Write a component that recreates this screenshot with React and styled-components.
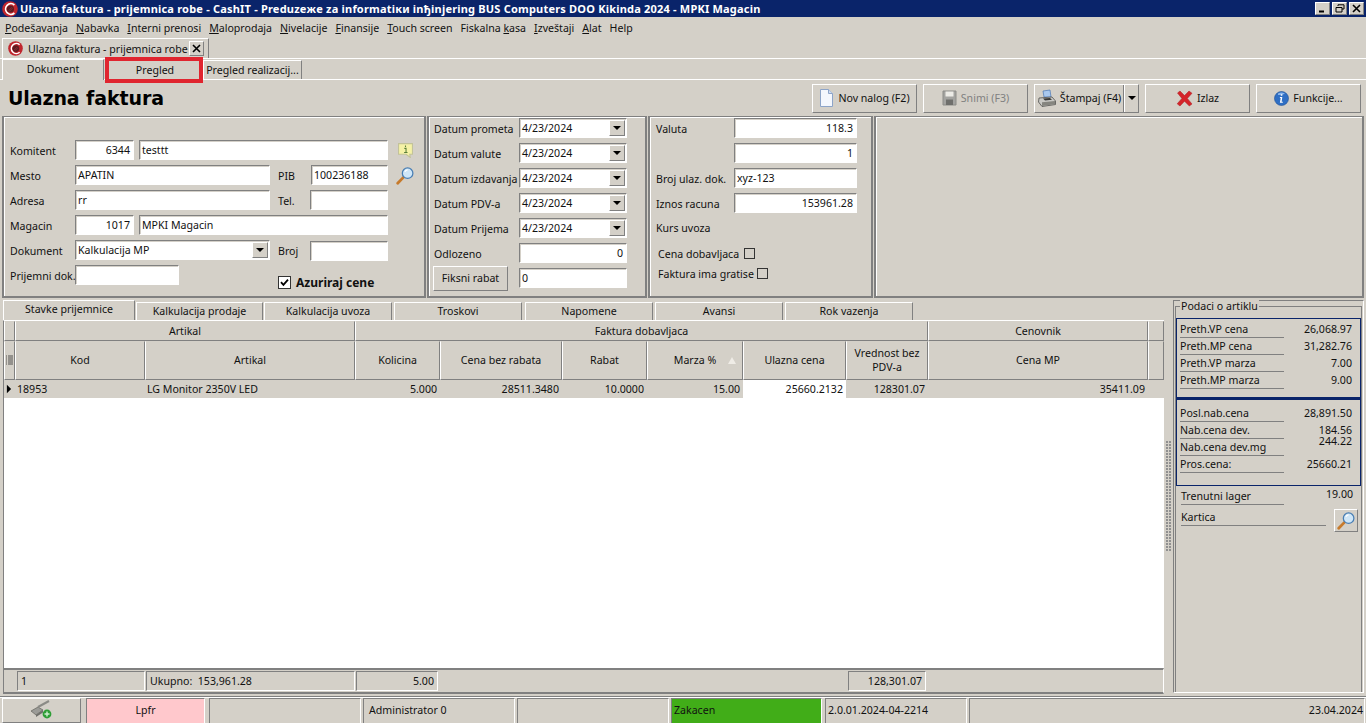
import React from 'react';
import styled, { createGlobalStyle, css } from 'styled-components';

const Global = createGlobalStyle`
  html, body { margin: 0; padding: 0; overflow: hidden; background: #d4d0c8; }
  * { box-sizing: border-box; }
`;

const FONT = `"Noto Sans", "DejaVu Sans", sans-serif`;
const BG = '#d4d0c8';

const sunken = css`
  border-style: solid;
  border-width: 1px;
  border-color: #808080 #fff #fff #808080;
`;
const raised = css`
  border-style: solid;
  border-width: 1px;
  border-color: #fff #808080 #808080 #fff;
`;

const Page = styled.div`
  width: 1366px; height: 723px; overflow: hidden; background: ${BG};
  display: flex; flex-direction: column;
  font: 10.6px/14px ${FONT}; color: #111;
`;
const TitleBar = styled.div`
  height: 17px; background: #0a246a; color: #fff; font-weight: 700;
  display: flex; align-items: center; padding: 0 2px 0 2px; flex: none;
  font-size: 11px; letter-spacing: 0.2px; white-space: nowrap;
`;
const TitleText = styled.span` margin-left: 2px; flex: 1; `;
const WinBtn = styled.button`
  width: 15px; height: 13px; padding: 0; margin-left: 2px; background: ${BG};
  ${raised}; display: flex; align-items: center; justify-content: center;
`;
const MenuBar = styled.div`
  height: 21px; flex: none; display: flex; align-items: center; padding-left: 5px; gap: 8px;
  white-space: nowrap;
`;
const MenuItem = styled.span` display: inline-block; `;
const MenuKey = styled.span` text-decoration: underline; `;
const DocStrip = styled.div`
  height: 21px; flex: none; padding-left: 2px; border-bottom: 1px solid #fff;
  display: flex; align-items: flex-end;
`;
const DocTab = styled.div`
  width: 207px; height: 20px; display: flex; align-items: center; padding-left: 5px;
  border-top: 1px solid #fff; border-left: 1px solid #fff; border-right: 1px solid #808080;
`;
const DocTitle = styled.span` margin-left: 5px; width: 161px; white-space: nowrap; `;
const CloseBox = styled.button`
  width: 15px; height: 15px; padding: 0; background: ${BG}; ${raised};
  display: flex; align-items: center; justify-content: center;
`;
const TabStrip = styled.div`
  height: 21px; flex: none; display: flex; align-items: flex-end; padding-left: 2px;
  border-bottom: 1px solid #fff;
`;
const PageTab = styled.div`
  position: relative; height: ${p => (p.$active ? 21 : 19)}px; width: ${p => p.$w}px;
  margin-left: ${p => p.$ml || 0}px; margin-bottom: ${p => (p.$active ? -1 : 0)}px;
  background: ${BG}; display: flex; align-items: center; justify-content: center;
  border-top: 1px solid #fff; border-left: 1px solid #fff; border-right: 1px solid #808080;
  white-space: nowrap; padding-bottom: ${p => (p.$active ? 3 : 0)}px;
  ${p => p.$marked && css`
    &::after {
      content: ''; position: absolute; left: -3px; right: -1px; top: -4px; bottom: -4px;
      border: 4px solid #e0252f;
    }
  `}
`;
const Head = styled.div`
  height: 36px; flex: none; display: flex; align-items: center; padding: 0 5px 0 8px;
`;
const H1 = styled.h1`
  margin: 0; flex: 1; font: 700 19px/26px "DejaVu Sans", sans-serif; color: #000; letter-spacing: -0.1px;
`;
const ToolBtn = styled.button`
  width: 105px; height: 29px; margin-left: ${p => p.$ml}px; padding: 0; background: ${BG};
  ${raised}; display: flex; align-items: center; justify-content: center; gap: 4px;
  font: 10.6px/14px ${FONT}; color: ${p => (p.disabled ? '#808080' : '#111')};
`;
const SplitBtn = styled.div`
  width: 105px; height: 29px; margin-left: 6px; background: ${BG}; ${raised};
  display: flex; align-items: stretch;
`;
const SplitMain = styled.div`
  flex: 1; display: flex; align-items: center; justify-content: center; gap: 3px;
  border-right: 1px solid #808080;
`;
const SplitArrow = styled.div`
  width: 14px; display: flex; align-items: center; justify-content: center;
  border-left: 1px solid #fff;
`;
const Arrow = styled.i`
  width: 0; height: 0; border-left: 4px solid transparent; border-right: 4px solid transparent;
  border-top: 4px solid #000; display: block;
`;
const FormRow = styled.div`
  height: 182px; flex: none; display: flex; padding-left: 2px; padding-right: 2px; gap: 1px;
`;
const Panel = styled.section`
  width: ${p => p.$w}px; flex: ${p => (p.$w ? 'none' : 1)};
  padding: ${p => p.$pt}px 0 0 ${p => p.$pl}px;
  border: 2px solid #808080;
  border-width: 1px 2px 2px 2px;
  box-shadow: inset 1px 1px 0 #fff;
`;
const Row = styled.div`
  height: 20px; margin-bottom: 5px; margin-top: ${p => p.$mt || 0}px;
  padding-left: ${p => p.$pl || 0}px;
  display: flex; align-items: center; white-space: nowrap;
`;
const Label = styled.label`
  width: ${p => p.$w}px; flex: none; padding-top: 1px; margin-left: ${p => p.$ml || 0}px;
`;
const Field = styled.div`
  width: ${p => p.$w}px; height: 20px; flex: none; background: #fff; ${sunken};
  box-shadow: inset 1px 1px 0 ${BG};
  margin-left: ${p => p.$ml || 0}px; margin-top: ${p => p.$mt || 0}px;
  text-align: ${p => (p.$right ? 'right' : 'left')};
  padding: 2px ${p => (p.$right ? 3 : 2)}px 0 2px; line-height: 14px;
`;
const Combo = styled(Field)`
  position: relative; padding-right: 18px;
`;
const ComboBtn = styled.span`
  position: absolute; right: 1px; top: 1px; bottom: 1px; width: 16px; background: ${BG}; ${raised};
  display: flex; align-items: center; justify-content: center;
`;
const Check = styled.span`
  width: ${p => p.$s || 11}px; height: ${p => p.$s || 11}px; flex: none; background: ${p => p.$bg || BG};
  border: 1px solid #333; display: flex; align-items: center; justify-content: center;
`;
const Azuriraj = styled.div`
  display: flex; align-items: center; margin: 15px 0 0 99px; font-weight: 700; font-size: 12px;
  gap: 5px;
`;
const IconSlot = styled.span` margin-left: ${p => p.$ml}px; display: flex; `;
const PlainBtn = styled.button`
  width: 75px; height: 25px; flex: none; padding: 0; background: ${BG}; ${raised}; margin-left: -1px;
  font: 10.6px/14px ${FONT}; color: #111;
`;
const Bottom = styled.div`
  flex: none; height: 398px; display: flex; padding-left: 3px;
`;
const Main = styled.div`
  width: 1161px; flex: none; display: flex; flex-direction: column; padding-top: 2px;
`;
const SubTabs = styled.div`
  height: 20px; flex: none; display: flex; align-items: flex-end;
`;
const SubTab = styled.div`
  width: ${p => p.$w}px; margin-left: ${p => p.$ml || 0}px; height: ${p => (p.$active ? 20 : 18)}px;
  background: ${BG}; display: flex; align-items: center; justify-content: center;
  border-top: 1px solid #fff; border-left: 1px solid #fff; border-right: 1px solid #808080;
  padding-bottom: ${p => (p.$active ? 3 : 1)}px; white-space: nowrap;
`;
const Table = styled.div`
  height: 374px; flex: none; display: flex; flex-direction: column;
  border-top: 1px solid #fff; border-left: 1px solid #808080;
`;
const GridRow = styled.div`
  height: ${p => p.$h}px; flex: none; display: grid; grid-template-columns: ${p => p.$cols};
`;
const HeadCell = styled.div`
  display: flex; align-items: center; justify-content: center; text-align: center; line-height: 14px;
  position: relative; padding-bottom: 1px;
  border-right: 1px solid #808080; border-bottom: 1px solid #808080;
  border-left: 1px solid #fff; border-top: 1px solid ${BG};
`;
const SortMark = styled.i`
  position: absolute; right: 6px; top: 15px; width: 0; height: 0;
  border-left: 4px solid transparent; border-right: 4px solid transparent;
  border-bottom: 7px solid #efece6;
`;
const Cell = styled.div`
  display: flex; align-items: center; white-space: nowrap; padding: 0 3px 0 2px;
  justify-content: ${p => (p.$right ? 'flex-end' : 'flex-start')};
  background: ${p => (p.$white ? '#fff' : BG)};
`;
const TableBody = styled.div` flex: 1; background: #fff; `;
const Foot = styled.div`
  height: 26px; flex: none; border-top: 2px solid #808080; border-bottom: 2px solid #808080;
  display: grid; grid-template-columns: ${p => p.$cols}; padding: 1px 0 1px;
  border-right: 1px solid #fff;
`;
const FootCell = styled.div`
  ${p => p.$box && sunken};
  ${p => p.$box && 'margin-right: 1px;'}
  display: flex; align-items: center; padding: 0 3px;
  justify-content: ${p => (p.$right ? 'flex-end' : 'flex-start')};
`;
const Splitter = styled.div`
  width: 9px; flex: none; display: flex; align-items: flex-start; justify-content: center; padding-top: 143px;
`;
const Grip = styled.div`
  width: 5px; height: 110px;
  background-image: radial-gradient(circle at 1px 1px, #909090 1px, transparent 1.2px);
  background-size: 3px 3px;
`;
const Side = styled.aside`
  width: 191px; flex: none; position: relative; margin-top: 2px; height: 393px;
  border-top: 1px solid #808080; border-left: 1px solid #808080;
  border-bottom: 1px solid #fff; border-right: 1px solid #fff;
  padding: 5px 1px 0;
`;
const Group = styled.div`
  position: relative; border: 1px solid #808080; border-bottom: 0; height: 386px;
  padding: 11px 0 0 0;
`;
const Legend = styled.span`
  position: absolute; left: 4px; top: -8px; background: ${BG}; padding: 0 1px; white-space: nowrap;
`;
const BlueBox = styled.div`
  height: ${p => p.$h}px; border: 1px solid #0a246a; padding: ${p => p.$pt}px 8px 0 3px;
  border-top-width: ${p => p.$tw || 1}px;
`;
const InfoRow = styled.div`
  height: 17px; display: flex; align-items: flex-start; white-space: nowrap; padding-left: ${p => p.$pl || 0}px;
  padding-right: ${p => p.$pr || 0}px; margin-top: ${p => p.$mt || 0}px;
`;
const InfoLabel = styled.span`
  width: ${p => p.$w || 104}px; height: 16px; border-bottom: 1px solid #808080; flex: none;
`;
const InfoValue = styled.span`
  margin-left: auto; line-height: 11px; padding-top: 2px;
  ${p => p.$up && `transform: translateY(-${p.$up}px);`}
`;
const LupaBtn = styled.button`
  width: 24px; height: 23px; padding: 0; margin: -1px 0 0 8px; background: ${BG}; ${raised};
  display: flex; align-items: center; justify-content: center;
`;
const StatusBar = styled.div`
  height: 27px; flex: none; border-top: 1px solid #808080; padding: 1px 1px 0 2px;
  display: flex; box-shadow: inset 0 1px 0 #fff;
`;
const Stat = styled.div`
  width: ${p => p.$w}px; margin-right: ${p => p.$mr}px; height: 25px; flex: ${p => (p.$w ? 'none' : 1)};
  ${sunken}; border-width: 1px 1px 0 1px;
  background: ${p => p.$bg || BG}; display: flex; align-items: center; white-space: nowrap;
  justify-content: ${p => p.$jc || 'flex-start'}; padding: 0 ${p => p.$px ?? 3}px 2px;
`;
const StatBtn = styled(Stat)`
  ${raised};
`;

const Logo = ({ s = 16 }) => (
  <svg width={s} height={s} viewBox="0 0 16 16">
    <circle cx="8" cy="8" r="7.8" fill="#c0262e" />
    <path d="M12.4 4A5.3 5.3 0 1 0 12.4 12" fill="none" stroke="#fff" strokeWidth="1.7" />
    <circle cx="8.4" cy="8" r="3.6" fill="#5e1a20" />
    <path d="M6.6 9.6L10 6.2M7.4 10.4L10.6 7.2" stroke="#8f3138" strokeWidth=".7" />
  </svg>
);
const DocIcon = () => (
  <svg width="15" height="18" viewBox="0 0 15 18">
    <path d="M1.5 .5H9.5L13.5 4.5V17.5H1.5Z" fill="#f4f7fd" stroke="#8da4c8" />
    <path d="M9.5 .5V4.5H13.5" fill="#cfdcf2" stroke="#8da4c8" />
  </svg>
);
const Floppy = () => (
  <svg width="15" height="16" viewBox="0 0 15 16">
    <path d="M1 1H14V15H1Z" fill="#a3a3a0" stroke="#8c8c88" />
    <path d="M3.5 1.5H11.5V6.5H3.5Z" fill="#ecebe6" />
    <path d="M4 9.5H11V15H4Z" fill="#6f6f6c" />
  </svg>
);
const Printer = () => (
  <svg width="20" height="19" viewBox="0 0 20 19">
    <path d="M6 2L13 1L14 8H7Z" fill="#a9c8ee" stroke="#4a77b4" strokeWidth=".7" />
    <path d="M2 9L15 8L18.5 12V15.5L5 17.5L1.5 13Z" fill="#c9c9c5" stroke="#4f4f4d" strokeWidth=".8" />
    <path d="M5 13.3L18 12V15.3L5 17Z" fill="#85857f" />
    <path d="M6 9.5L13 9L15 10.8L8 11.4Z" fill="#3a3a38" />
  </svg>
);
const RedX = () => (
  <svg width="17" height="17" viewBox="0 0 17 17">
    <path d="M1.5 3L4 1L8.5 5.6L13 1L16 3.3L11.3 8.4L16 14L13.3 16L8.5 11.2L4 16L1.2 13.8L5.9 8.4Z" fill="#d5242a" stroke="#a81d20" strokeWidth=".5" />
  </svg>
);
const InfoBall = () => (
  <svg width="15" height="15" viewBox="0 0 15 15">
    <circle cx="7.5" cy="7.5" r="7" fill="#2f6fc4" stroke="#1d4f96" strokeWidth=".6" />
    <path d="M4 2.5A6 5 0 0 1 11 2.5A8 5 0 0 1 4 4Z" fill="#8ab6ec" />
    <path d="M8.3 3.2V4.7H6.8V3.2ZM8.3 6L7.6 10.8H8.8V11.8H5.9L6.7 7H5.9V6Z" fill="#fff" />
  </svg>
);
const Lupa = ({ s = 19 }) => (
  <svg width={s} height={s} viewBox="0 0 18 18">
    <path d="M1.6 16.4L7 10.8" stroke="#c77a2b" strokeWidth="2.6" strokeLinecap="round" />
    <circle cx="11" cy="6.8" r="5" fill="#cfe6f7" stroke="#4a7fb4" strokeWidth="1.2" />
    <path d="M8.4 5.4A3 3 0 0 1 11 3.6" fill="none" stroke="#fff" strokeWidth="1.2" />
  </svg>
);
const Note = () => (
  <svg width="17" height="16" viewBox="0 0 15 15">
    <path d="M1 1.5H14V11.5H11.5L12 14.5L8 11.5H1Z" fill="#f5f2a6" stroke="#c2c29a" />
    <path d="M7.5 3.2V4.6M6.4 6H8V9.8M6.2 9.8H9.4" stroke="#5a7f3a" fill="none" strokeWidth="1" />
  </svg>
);
const PlugIcon = () => (
  <svg width="24" height="19" viewBox="0 0 24 19">
    <path d="M1 11L8 7L13 10L6 15Z" fill="#9b9b97" stroke="#55554f" strokeWidth=".6" />
    <path d="M8 7L19 1" stroke="#8b8b86" strokeWidth="2" />
    <path d="M6 15L13 10V12.6L6 17Z" fill="#6f6f6b" />
    <circle cx="17" cy="14" r="4.4" fill="#2d9e35" />
    <path d="M17 11.5V16.5M14.5 14H19.5" stroke="#cfeed0" strokeWidth="1.4" />
  </svg>
);
const Tick = () => (
  <svg width="9" height="9" viewBox="0 0 9 9"><path d="M1 4.2L3.4 6.8L8 1.6" fill="none" stroke="#000" strokeWidth="1.8" /></svg>
);
const XGlyph = ({ s = 9 }) => (
  <svg width={s} height={s} viewBox="0 0 9 9"><path d="M1 1L8 8M8 1L1 8" stroke="#000" strokeWidth="1.6" /></svg>
);
const RowMarker = () => (
  <svg width="7" height="10" viewBox="0 0 7 10"><path d="M1 0L6 5L1 10Z" fill="#000" /></svg>
);
const ListGlyph = () => (
  <svg width="7" height="11" viewBox="0 0 7 11">
    <path d="M0 1H1M0 3H1M0 5H1M0 7H1M0 9H1M2 1H7M2 3H7M2 5H7M2 7H7M2 9H7" stroke="#333" strokeWidth=".8" />
  </svg>
);

const menu = [['', 'P', 'odešavanja'], ['', 'N', 'abavka'], ['', 'I', 'nterni prenosi'], ['', 'M', 'aloprodaja'], ['', 'N', 'ivelacije'], ['', 'F', 'inansije'], ['', 'T', 'ouch screen'], ['Fiskalna ', 'k', 'asa'], ['', 'I', 'zveštaji'], ['', 'A', 'lat'], ['Help', '', '']];
const dates = ['Datum prometa', 'Datum valute', 'Datum izdavanja', 'Datum PDV-a', 'Datum Prijema'];
const subTabs = [
  ['Kalkulacija prodaje', 127, 1], ['Kalkulacija uvoza', 128, 1], ['Troskovi', 128, 2],
  ['Napomene', 128, 3], ['Avansi', 128, 2], ['Rok vazenja', 128, 2],
];
const COLS = '11px 130px 210px 85px 122px 85px 96px 103px 82px 220px 16px';
const GROUPS = '11px 340px 573px 220px 16px';
const FOOT = '13px 129px 210px 83px 409px 79px 1fr';
const heads = ['Kod', 'Artikal', 'Kolicina', 'Cena bez rabata', 'Rabat', 'Marza %', 'Ulazna cena', 'Vrednost bez PDV-a', 'Cena MP'];
const info1 = [['Preth.VP cena', '26,068.97'], ['Preth.MP cena', '31,282.76'], ['Preth.VP marza', '7.00'], ['Preth.MP marza', '9.00']];
const info2 = [['Posl.nab.cena', '28,891.50'], ['Nab.cena dev.', '184.56'], ['Nab.cena dev.mg', '244.22', 6], ['Pros.cena:', '25660.21']];

export default function App() {
  return (
    <Page>
      <Global />
      <TitleBar>
        <Logo />
        <TitleText>Ulazna faktura - prijemnica robe - CashIT - Preduzeжe za informatiки inђinjering BUS Computers DOO Kikinda 2024 - MPKI Magacin</TitleText>
        <WinBtn><svg width="9" height="9" viewBox="0 0 9 9"><path d="M1 7.5H6" stroke="#000" strokeWidth="2" /></svg></WinBtn>
        <WinBtn><svg width="10" height="9" viewBox="0 0 10 9"><path d="M3 2V.8H9V5H7M1 3.5H7V8H1Z" fill="none" stroke="#000" /></svg></WinBtn>
        <WinBtn><XGlyph /></WinBtn>
      </TitleBar>
      <MenuBar>
        {menu.map(([a, k, b]) => <MenuItem key={a + k + b}>{a}<MenuKey>{k}</MenuKey>{b}</MenuItem>)}
      </MenuBar>
      <DocStrip>
        <DocTab><Logo s={15} /><DocTitle>Ulazna faktura - prijemnica robe</DocTitle><CloseBox><XGlyph /></CloseBox></DocTab>
      </DocStrip>
      <TabStrip>
        <PageTab $w={102} $active>Dokument</PageTab>
        <PageTab $w={96} $ml={3} $marked>Pregled</PageTab>
        <PageTab $w={99}>Pregled realizacij...</PageTab>
      </TabStrip>
      <Head>
        <H1>Ulazna faktura</H1>
        <ToolBtn $ml={0}><DocIcon />Nov nalog (F2)</ToolBtn>
        <ToolBtn $ml={6} disabled><Floppy />Snimi (F3)</ToolBtn>
        <SplitBtn><SplitMain><Printer />Štampaj (F4)</SplitMain><SplitArrow><Arrow /></SplitArrow></SplitBtn>
        <ToolBtn $ml={6}><RedX />Izlaz</ToolBtn>
        <ToolBtn $ml={6}><InfoBall />Funkcije...</ToolBtn>
      </Head>
      <FormRow>
        <Panel $w={424} $pt={23} $pl={6}>
          <Row><Label $w={65}>Komitent</Label><Field $w={59} $right>6344</Field><Field $w={249} $ml={5}>testtt</Field><IconSlot $ml={9}><Note /></IconSlot></Row>
          <Row><Label $w={65}>Mesto</Label><Field $w={195}>APATIN</Field><Label $w={33} $ml={8}>PIB</Label><Field $w={77}>100236188</Field><IconSlot $ml={8}><Lupa /></IconSlot></Row>
          <Row><Label $w={65}>Adresa</Label><Field $w={195}>rr</Field><Label $w={32} $ml={8}>Tel.</Label><Field $w={78} /></Row>
          <Row><Label $w={65}>Magacin</Label><Field $w={59} $right>1017</Field><Field $w={249} $ml={5}>MPKI Magacin</Field></Row>
          <Row><Label $w={65}>Dokument</Label><Combo $w={195}>Kalkulacija MP<ComboBtn><Arrow /></ComboBtn></Combo><Label $w={32} $ml={8}>Broj</Label><Field $w={78} $mt={2} /></Row>
          <Row><Label $w={65}>Prijemni dok.</Label><Field $w={104} /><Azuriraj><Check $s={13} $bg="#fff"><Tick /></Check>Azuriraj cene</Azuriraj></Row>
        </Panel>
        <Panel $w={220} $pt={1} $pl={5}>
          {dates.map(d => (
            <Row key={d}><Label $w={85}>{d}</Label><Combo $w={108}>4/23/2024<ComboBtn><Arrow /></ComboBtn></Combo></Row>
          ))}
          <Row><Label $w={85}>Odlozeno</Label><Field $w={108} $right>0</Field></Row>
          <Row $mt={1}><PlainBtn>Fiksni rabat</PlainBtn><Field $w={108} $ml={11}>0</Field></Row>
        </Panel>
        <Panel $w={225} $pt={1} $pl={6}>
          <Row><Label $w={78}>Valuta</Label><Field $w={123} $right>118.3</Field></Row>
          <Row><Label $w={78} /><Field $w={123} $right>1</Field></Row>
          <Row><Label $w={78}>Broj ulaz. dok.</Label><Field $w={123}>xyz-123</Field></Row>
          <Row><Label $w={78}>Iznos racuna</Label><Field $w={123} $right>153961.28</Field></Row>
          <Row>Kurs uvoza</Row>
          <Row $pl={2}><Label $w={86}>Cena dobavljaca</Label><Check /></Row>
          <Row $pl={2} $mt={-5}><Label $w={99}>Faktura ima gratise</Label><Check /></Row>
        </Panel>
        <Panel />
      </FormRow>
      <Bottom>
        <Main>
          <SubTabs>
            <SubTab $w={132} $active>Stavke prijemnice</SubTab>
            {subTabs.map(([t, w, ml]) => <SubTab key={t} $w={w} $ml={ml}>{t}</SubTab>)}
          </SubTabs>
          <Table>
            <GridRow $h={20} $cols={GROUPS}>
              <HeadCell /><HeadCell>Artikal</HeadCell><HeadCell>Faktura dobavljaca</HeadCell><HeadCell>Cenovnik</HeadCell><HeadCell />
            </GridRow>
            <GridRow $h={39} $cols={COLS}>
              <HeadCell><ListGlyph /></HeadCell>
              {heads.map(h => <HeadCell key={h}>{h}{h === 'Marza %' && <SortMark />}</HeadCell>)}
              <HeadCell />
            </GridRow>
            <GridRow $h={18} $cols={COLS}>
              <Cell><RowMarker /></Cell>
              <Cell>18953</Cell>
              <Cell>LG Monitor 2350V LED</Cell>
              <Cell $right>5.000</Cell>
              <Cell $right>28511.3480</Cell>
              <Cell $right>10.0000</Cell>
              <Cell $right>15.00</Cell>
              <Cell $right $white>25660.2132</Cell>
              <Cell $right>128301.07</Cell>
              <Cell $right>35411.09</Cell>
              <Cell />
            </GridRow>
            <TableBody />
            <Foot $cols={FOOT}>
              <FootCell />
              <FootCell $box>1</FootCell>
              <FootCell $box>Ukupno:&nbsp; 153,961.28</FootCell>
              <FootCell $box $right>5.00</FootCell>
              <FootCell />
              <FootCell $box $right>128,301.07</FootCell>
              <FootCell />
            </Foot>
          </Table>
        </Main>
        <Splitter><Grip /></Splitter>
        <Side>
          <Group>
            <Legend>Podaci o artiklu</Legend>
            <BlueBox $h={80} $pt={3}>
              {info1.map(([a, b]) => <InfoRow key={a}><InfoLabel>{a}</InfoLabel><InfoValue>{b}</InfoValue></InfoRow>)}
            </BlueBox>
            <BlueBox $h={88} $pt={6} $tw={2}>
              {info2.map(([a, b, up]) => <InfoRow key={a}><InfoLabel>{a}</InfoLabel><InfoValue $up={up}>{b}</InfoValue></InfoRow>)}
            </BlueBox>
            <InfoRow $pl={5} $pr={8} $mt={3}><InfoLabel $w={103}>Trenutni lager</InfoLabel><InfoValue $up={2}>19.00</InfoValue></InfoRow>
            <InfoRow $pl={5} $mt={4}><InfoLabel $w={145}>Kartica</InfoLabel><LupaBtn><Lupa /></LupaBtn></InfoRow>
          </Group>
        </Side>
      </Bottom>
      <StatusBar>
        <StatBtn $w={79} $mr={5} $jc="center"><PlugIcon /></StatBtn>
        <Stat $w={119} $mr={4} $bg="#ffc8cc" $jc="center">Lpfr</Stat>
        <Stat $w={152} $mr={2} />
        <Stat $w={152} $mr={2} $px={5}>Administrator 0</Stat>
        <Stat $w={152} $mr={2} />
        <Stat $w={151} $mr={3} $bg="#41ad18" $px={2}>Zakacen</Stat>
        <Stat $w={142} $mr={2} $px={2}>2.0.01.2024-04-2214</Stat>
        <Stat $jc="flex-end" $px={1}>23.04.2024</Stat>
      </StatusBar>
    </Page>
  );
}
